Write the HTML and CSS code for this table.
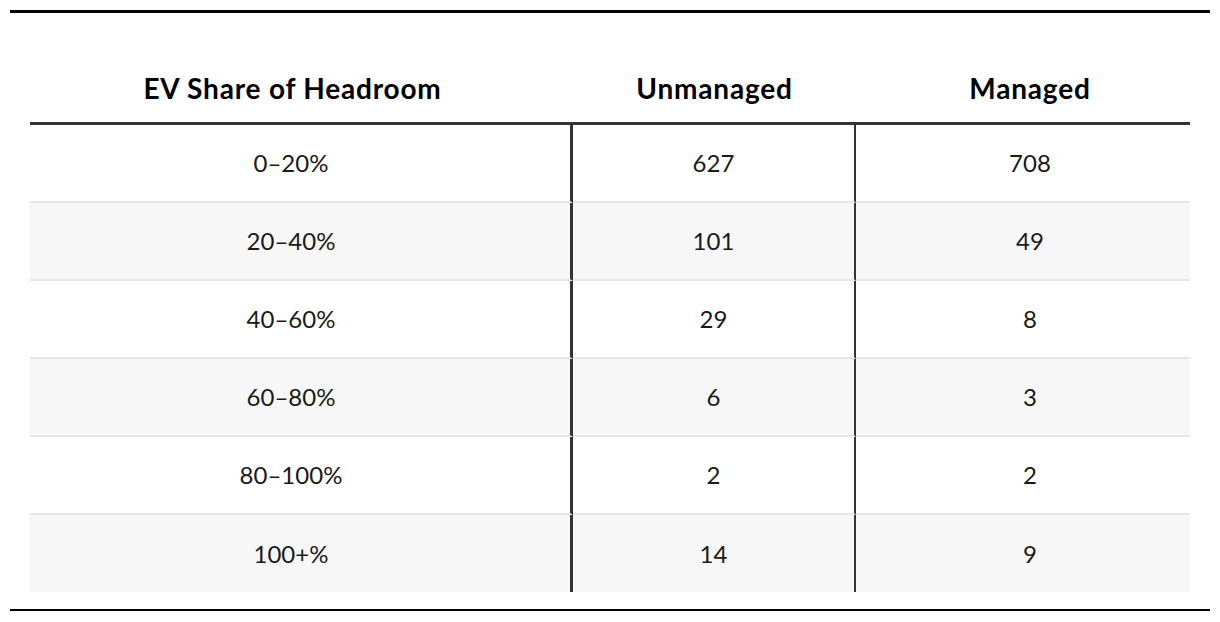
FILE: index.html
```html
<!DOCTYPE html>
<html>
<head>
<meta charset="utf-8">
<link rel="stylesheet" href="styles.css">
</head>
<body>
<div class="wrap">
  <table class="data">
    <thead>
      <tr>
        <th class="c1">EV Share of Headroom</th>
        <th class="c2">Unmanaged</th>
        <th class="c3">Managed</th>
      </tr>
    </thead>
    <tbody>
      <tr><td class="c1">0–20%</td><td class="c2">627</td><td class="c3">708</td></tr>
      <tr><td class="c1">20–40%</td><td class="c2">101</td><td class="c3">49</td></tr>
      <tr><td class="c1">40–60%</td><td class="c2">29</td><td class="c3">8</td></tr>
      <tr><td class="c1">60–80%</td><td class="c2">6</td><td class="c3">3</td></tr>
      <tr><td class="c1">80–100%</td><td class="c2">2</td><td class="c3">2</td></tr>
      <tr><td class="c1">100+%</td><td class="c2">14</td><td class="c3">9</td></tr>
    </tbody>
  </table>
</div>
</body>
</html>
```
FILE: styles.css
```css
html, body {
  margin: 0;
  padding: 0;
  background: #fff;
}
body {
  font-family: "Lato", "Noto Sans", sans-serif;
  color: #1a1a1a;
}
.wrap {
  width: 1200px;
  margin: 10px 10px 0 10px;
  border-top: 3px solid #000;
  border-bottom: 2px solid #000;
  padding: 0 20px 17px;
  box-sizing: border-box;
}
.data {
  width: 1160px;
  border-collapse: separate;
  border-spacing: 0;
  table-layout: fixed;
}
.data th {
  height: 112px;
  box-sizing: border-box;
  vertical-align: bottom;
  padding: 0 0 18px;
  font-size: 28px;
  line-height: 32px;
  font-weight: 700;
  letter-spacing: 0.8px;
  color: #000;
  text-align: center;
  border-bottom: 3px solid #333;
}
.data td {
  height: 78px;
  box-sizing: border-box;
  padding: 0;
  font-size: 24px;
  line-height: 30px;
  text-align: center;
  vertical-align: middle;
  border-bottom: 2px solid #e6e6e6;
}
.data tbody tr:nth-child(even) td {
  background: #f7f7f7;
}
.data tbody tr:last-child td {
  border-bottom: none;
  height: 77px;
}
.data .c1 {
  width: 543px;
  padding-right: 18px;
}
.data td.c1 {
  border-right: 3px solid #333;
}
.data .c2 {
  width: 283px;
}
.data td.c2 {
  border-right: 2px solid #333;
}
.data .c3 {
  width: 334px;
  padding-left: 14px;
}
```
